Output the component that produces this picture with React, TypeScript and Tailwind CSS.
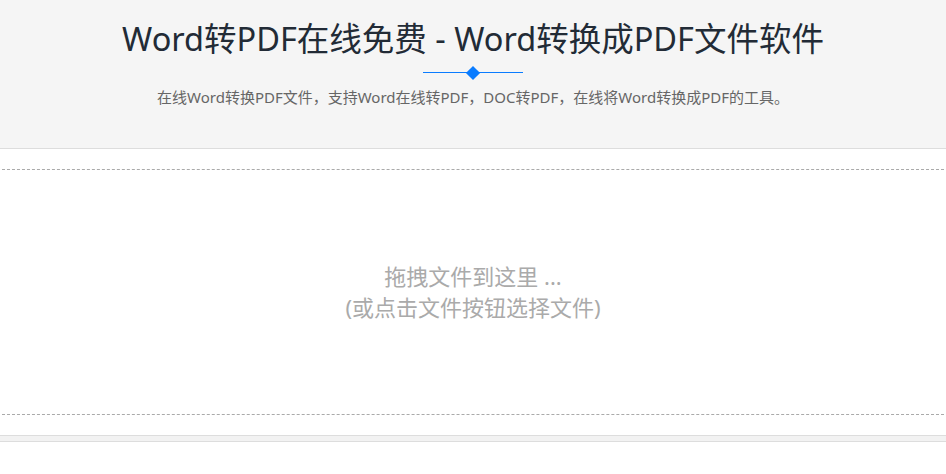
import React from "react";

const font = { fontFamily: '"Noto Sans", "Noto Sans CJK SC", sans-serif' };

function Divider() {
  return (
    <div className="relative mx-auto mt-[5px] h-[14px] w-[100px]">
      <div className="absolute left-0 right-0 top-[6px] h-px bg-[#0a7cff]" />
      <div className="absolute left-[45px] top-0 h-[10px] w-[10px] translate-y-[2px] rotate-45 bg-[#0a7cff]" />
    </div>
  );
}

export default function App() {
  return (
    <div className="min-h-[474px] w-full bg-white" style={font}>
      <header className="h-[149px] border-b border-[#dddddd] bg-[#f5f5f5] pt-[17px] text-center">
        <h1 className="text-[32.5px] leading-[44px] text-[#222b36]">
          Word转PDF在线免费 - Word转换成PDF文件软件
        </h1>
        <Divider />
        <p className="mt-[6px] text-[15px] leading-[22px] text-[#666666]">
          在线Word转换PDF文件，支持Word在线转PDF，DOC转PDF，在线将Word转换成PDF的工具。
        </p>
      </header>
      <main className="pt-[20px]">
        <div className="mx-[2px] flex h-[246px] flex-col items-center justify-center border-y border-dashed border-[#aaaaaa]">
          <div className="text-center text-[22px] leading-[31px] text-[#aaaaaa]">
            <div>拖拽文件到这里 ...</div>
            <div>(或点击文件按钮选择文件)</div>
          </div>
        </div>
        <div className="mt-[20px] h-[7px] border-y border-[#dddddd] bg-[#f2f2f2]" />
      </main>
    </div>
  );
}
